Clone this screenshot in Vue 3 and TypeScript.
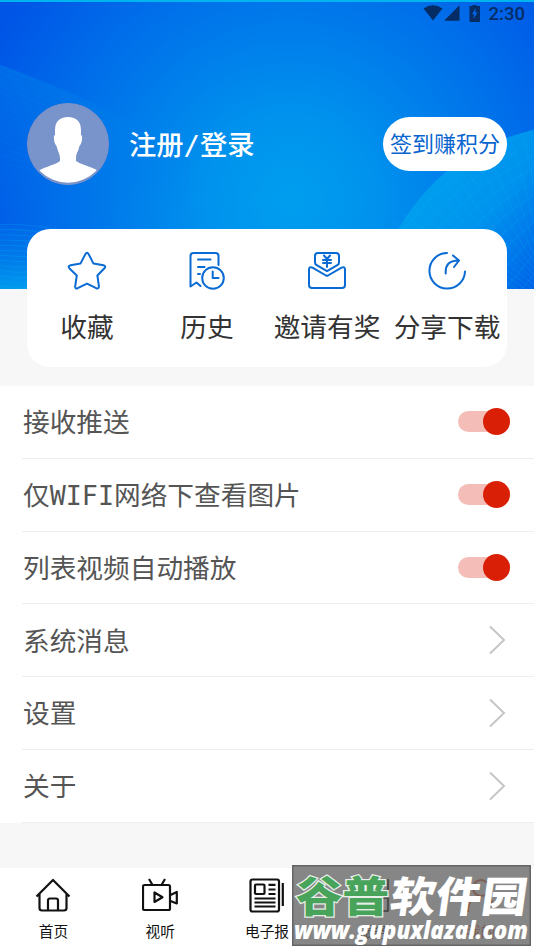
<script setup lang="ts">
import { ref } from 'vue'

interface Shortcut { id: string; label: string }
interface Setting { label: string; toggle: boolean }

const shortcuts: Shortcut[] = [
  { id: 'star', label: '收藏' },
  { id: 'history', label: '历史' },
  { id: 'invite', label: '邀请有奖' },
  { id: 'share', label: '分享下载' },
]
const settings = ref<Setting[]>([
  { label: '接收推送', toggle: true },
  { label: '仅WIFI网络下查看图片', toggle: true },
  { label: '列表视频自动播放', toggle: true },
  { label: '系统消息', toggle: false },
  { label: '设置', toggle: false },
  { label: '关于', toggle: false },
])

// Curved strands of the decorative network on both sides of the banner.
const strands = Array.from({ length: 15 }, (_, i) => i)
const rightRise = (i: number) => `M${390 + i * 13} ${250 + i * 4} Q${435 + i * 11} ${175 + i * 9} 540 ${126 + i * 13}`
const rightFall = (i: number) => `M${535 - i * 11} ${130 + i * 7} Q${550 - i * 8} ${215 + i * 3} 545 ${258 + i * 4}`
const leftTop = (i: number) => `M-5 ${63 + i * 7} Q60 ${92 + i * 6} ${150 - i * 6} ${138 + i * 3}`
const leftBottom = (i: number) => `M-5 ${225 + i * 5} Q${18 + i * 2} ${222 + i * 6} 75 ${232 + i * 4}`
</script>

<template>
  <div class="screen">
    <header class="banner">
      <svg class="mesh" viewBox="0 0 534 289" fill="none">
        <defs>
          <linearGradient id="dome" x1="0" y1="0" x2="1" y2="1">
            <stop offset="0" stop-color="#00aaf0" stop-opacity=".9" />
            <stop offset=".6" stop-color="#0098ee" stop-opacity=".85" />
            <stop offset="1" stop-color="#0060e8" stop-opacity=".8" />
          </linearGradient>
          <linearGradient id="floor" x1="0" y1="0" x2="0" y2="1">
            <stop offset="0" stop-color="#0073e8" stop-opacity=".3" />
            <stop offset="1" stop-color="#00a9f0" stop-opacity=".8" />
          </linearGradient>
          <linearGradient id="haze" x1="0" y1="0" x2="0" y2="1">
            <stop offset="0" stop-color="#008ae9" stop-opacity=".4" />
            <stop offset="1" stop-color="#0070e9" stop-opacity="0" />
          </linearGradient>
        </defs>
        <path d="M392 240Q440 150 534 130V289H392Z" fill="url(#dome)" />
        <path d="M0 65Q75 91 190 150V215H0Z" fill="url(#haze)" />
        <path d="M0 225Q70 235 110 229V289H0Z" fill="url(#floor)" />
        <g stroke="#00b7f2">
          <path v-for="i in strands" :key="'r' + i" :d="rightRise(i)" opacity=".26" />
          <path v-for="i in strands" :key="'f' + i" :d="rightFall(i)" opacity=".22" />
          <path v-for="i in strands" :key="'t' + i" :d="leftTop(i)" opacity=".08" />
          <path v-for="i in strands" :key="'b' + i" :d="leftBottom(i)" opacity=".25" />
        </g>
      </svg>
      <div class="status">
        <svg class="wifi" viewBox="0 0 20 16"><path d="M.5 3.4Q10-3 19.5 3.4L10 15.5Z" /></svg>
        <svg class="signal" viewBox="0 0 16 16"><path d="M15.5.3V15.7H.1Z" /></svg>
        <svg class="battery" viewBox="0 0 12 17"><path fill-rule="evenodd" d="M3.5 1V0h4v1H11v16H.5V1ZM6.8 3 3 9.3h2.1L4.4 14l4.1-6.5H6.3Z" /></svg>
        <span>2:30</span>
      </div>
      <div class="profile">
        <svg class="avatar" viewBox="0 0 82 82">
          <defs><clipPath id="face"><circle cx="41" cy="41" r="38.8" /></clipPath></defs>
          <circle cx="41" cy="41" r="40.5" fill="#7993cb" stroke="#8291c4" />
          <path clip-path="url(#face)" fill="#fff" d="M41 14C32.5 14 28 19 28 27v5c-1.800.500-1.200 6 .200 9 .8 1.600 1.500 2 1.800 3.500.600 4 3 6.500 3 10.500V58c-4 3.500-14 5.500-21 9.500V82h58V67c-7-3.500-17-6-21-9V54.500c0-4 2.400-6 3-10 .3-1.500 1-2 1.800-3.500 1.400-3 2-8.500.2-9v-5C54 19 49.500 14 41 14Z" />
        </svg>
        <span class="login">注册/登录</span>
        <button class="sign">签到赚积分</button>
      </div>
    </header>

    <section class="card">
      <div v-for="s in shortcuts" :key="s.id" class="shortcut">
        <svg class="shortcut-icon" viewBox="0 0 40 40">
          <path v-if="s.id === 'star'" d="M18.400 3.100Q20 .6 21.600 3.100L26.500 12.600 36.400 14.200Q39.500 15 37.200 17.500L30.400 24.500 31.900 35.100Q32 38.200 29.200 37.200L20 32.700 10.700 37.200Q7.900 38.200 8.200 35.100L9.800 24.500 2.500 17.500Q.5 15 3.600 14.200L13.500 12.600Z" />
          <template v-else-if="s.id === 'history'">
            <path d="M31.500 14V5Q31.500 2 28.500 2H6.500Q3.500 2 3.500 5V35.500L9.500 31.500 13.500 35M11 8.500H23.500M11 16H17.500M11 23H13" />
            <circle cx="26" cy="27" r="10.800" /><path d="M25.700 20.500V27H31.500" />
          </template>
          <template v-else-if="s.id === 'invite'">
            <path d="M20 20.200 9.700 14.200Q8 13.200 8 11.500V5Q8 2 11 2H29Q32 2 32 5V11.500Q32 13.200 30.300 14.200ZM5.500 16.700Q2 15 2 18.500V34Q2 37 5 37H35Q38 37 38 34V18.500Q38 15 34.500 16.700L21 24.500Q20 25 19 24.500Z" />
            <path d="M17 4.500 20 8 23 4.500M16 9H24M16 12H24M20 8V16" />
          </template>
          <path v-else d="M20 2A17.800 17.800 0 1 0 38 20.500M18.700 22.500C18.200 14 22 9.500 31.500 9.500M26 4.500 32 9.500 27 16" />
        </svg>
        <span>{{ s.label }}</span>
      </div>
    </section>

    <main class="settings">
      <div v-for="item in settings" :key="item.label" class="row">
        <span class="row-label">{{ item.label }}</span>
        <i v-if="item.toggle" class="switch"><b></b></i>
        <svg v-else class="chevron" viewBox="0 0 17 30"><path d="M1 1.500 15 15 1 28.500" /></svg>
      </div>
    </main>

    <nav class="tabs">
      <div class="tab">
        <svg viewBox="0 0 36 36"><path d="M1.500 18.500 18 2 34.500 18.500M4.500 16V30Q4.500 32.500 7 32.500H29Q31.500 32.500 31.500 30V16M13 32V22.500Q13 20.500 15 20.500H21Q23 20.500 23 22.500V32" /></svg>
        <span>首页</span>
      </div>
      <div class="tab">
        <svg viewBox="0 0 36 36"><rect x="1" y="7" width="27" height="25" rx="1.500" /><path d="M7 1 10.500 7M23 1 19.500 7M12.500 14.500V24L20.500 19.200ZM28.500 17 34.800 14V25.500L28.500 23" /></svg>
        <span>视听</span>
      </div>
      <div class="tab">
        <svg viewBox="0 0 36 36"><rect x="1.500" y="1.500" width="28.500" height="32" rx="2" /><path d="M33.800 5V28M19.500 6.800H26.500M19.500 11.500H26.500M19.500 16H26.500M5.500 20.500H26.500M5.500 24.500H26.500M5.500 28.500H26.500" /><rect x="6" y="6.500" width="9.500" height="9.500" rx="1" /></svg>
        <span>电子报</span>
      </div>
      <div class="tab">
        <svg viewBox="0 0 36 36"><rect x="2" y="2" width="12" height="13" /><rect x="20" y="2" width="12" height="13" /><rect x="2" y="20" width="12" height="13" /><rect x="20" y="20" width="12" height="13" /></svg>
        <span>服务</span>
      </div>
      <div class="tab active">
        <svg viewBox="0 0 36 36"><circle cx="18" cy="10" r="8" /><path d="M5 34V30Q6 21 14 19M31 34V30Q30 21 22 19" /></svg>
        <span>我的</span>
      </div>
    </nav>

    <svg class="stamp" viewBox="0 0 239 81">
      <rect x=".75" y=".75" width="237.500" height="79.500" />
      <g class="brand">
        <text class="green" x="4" y="47" textLength="93" lengthAdjust="spacingAndGlyphs">谷普</text>
        <text x="97" y="47" textLength="137" lengthAdjust="spacingAndGlyphs" transform="translate(6 0) skewX(-8)">软件园</text>
      </g>
      <text class="site" x="2" y="74" textLength="234" lengthAdjust="spacingAndGlyphs">www.gupuxlazal.com</text>
    </svg>
  </div>
</template>

<style>
body { margin: 0; }
</style>

<style scoped>
.screen { position: relative; width: 534px; height: 950px; overflow: hidden; display: flex; flex-direction: column; background: #f7f7f7; font-family: "Noto Sans CJK SC", sans-serif; }
.banner { position: relative; height: 289px; flex: none; box-sizing: border-box; border-top: 2px solid #00b5ef; background: radial-gradient(circle at 290px 198px, #009eef 0, #0092ed 85px, #007deb 170px, #0069e9 255px, #0055e6 335px); }
.mesh { position: absolute; top: -2px; left: 0; width: 534px; height: 289px; }
.status { position: relative; display: flex; align-items: center; justify-content: flex-end; height: 22px; padding-right: 9px; color: #062c65; font: 500 18.500px/22px Roboto, sans-serif; }
.status span { padding-top: 1px; }
.status svg { fill: #062c65; }
.wifi { width: 20px; height: 16px; margin-right: 1px; }
.signal { width: 16px; height: 16px; }
.battery { width: 12px; height: 17px; margin: 0 8px 0 9px; }
.profile { position: relative; display: flex; align-items: center; height: 82px; padding: 79px 27px 0; }
.avatar { width: 82px; height: 82px; }
.login { margin-left: 20px; padding-top: 3px; color: #fff; font-family: "DejaVu Sans Mono", "Noto Sans CJK SC", sans-serif; font-size: 27.300px; font-weight: 500; line-height: 36px; white-space: nowrap; }
.sign { margin-left: auto; width: 124px; height: 54px; border: 0; padding: 0 0 3px; border-radius: 27px; background: #fff; color: #0865cf; font: 22px/51px "Noto Sans CJK SC", sans-serif; white-space: nowrap; }
.card { position: relative; display: flex; flex: none; box-sizing: border-box; width: 480px; height: 138px; margin: -60px 27px 0; padding-top: 22px; border-radius: 23px; background: #fff; }
.shortcut { display: flex; flex: 1 0 0; flex-direction: column; align-items: center; min-width: 0; color: #333; font-size: 26.700px; line-height: 40px; white-space: nowrap; }
.shortcut-icon { width: 40px; height: 40px; margin-bottom: 15px; fill: none; stroke: #096bd3; stroke-width: 2; stroke-linecap: round; stroke-linejoin: round; }
.settings { margin-top: 19px; flex: none; height: 437px; background: #fff; }
.row { display: flex; align-items: center; justify-content: space-between; box-sizing: border-box; height: 72.750px; margin-left: 22px; padding: 0 24px 0 1px; border-bottom: 1px solid #eee; color: #555; font-family: "DejaVu Sans Mono", "Noto Sans CJK SC", sans-serif; font-size: 26.700px; line-height: 40px; white-space: nowrap; }
.row-label { padding-top: 3px; }
.switch { display: flex; align-items: center; justify-content: flex-end; width: 52px; height: 21px; border-radius: 11px; background: #f4bdb8; }
.switch b { width: 27px; height: 27px; border-radius: 50%; background: #d92006; }
.chevron { width: 17px; height: 30px; margin-right: 4px; fill: none; stroke: #c6c6c6; stroke-width: 2; }
.tabs { display: flex; margin-top: auto; height: 82px; background: #fff; }
.tab { display: flex; flex: 1 0 0; flex-direction: column; align-items: center; padding-top: 10px; font-size: 14.700px; line-height: 20px; color: #111; }
.tab svg { width: 36px; height: 36px; margin-bottom: 7px; fill: none; stroke: currentColor; stroke-width: 2.200; stroke-linejoin: round; }
.active { color: #dc4e20; }
.stamp { position: absolute; left: 292px; top: 865px; width: 239px; height: 81px; }
.stamp rect { fill: rgba(98, 98, 98, .77); stroke: #656565; stroke-width: 1.500; }
.brand { fill: #fff; font-family: "Noto Sans CJK SC", sans-serif; font-size: 42px; font-weight: 900; }
.green { fill: #48a35b; stroke: #e7efe8; stroke-width: 2.500; paint-order: stroke; }
.site { fill: #fff; font: italic 800 24px "Open Sans", sans-serif; }
</style>
